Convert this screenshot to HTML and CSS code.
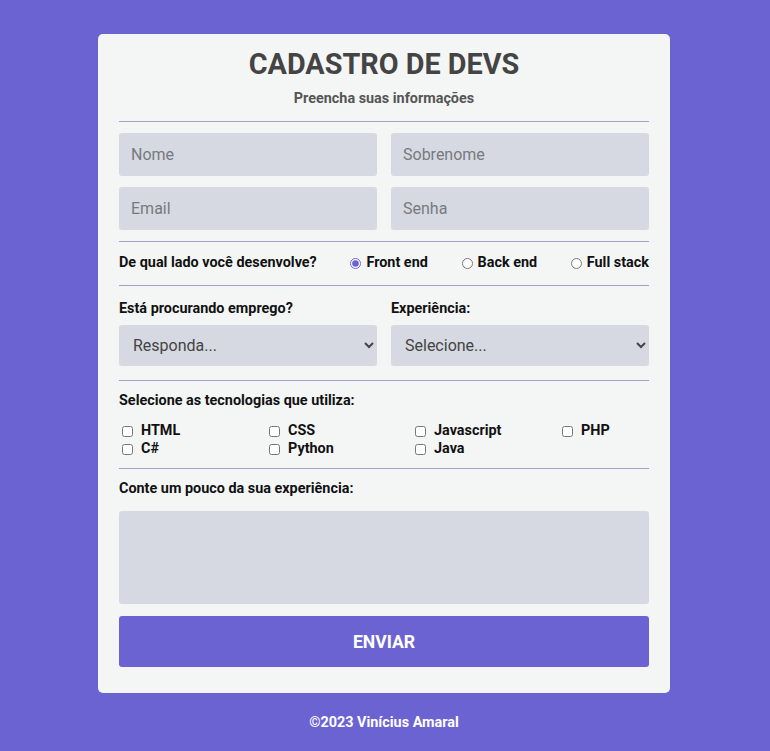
FILE: index.html
```html
<!DOCTYPE html>
<html lang="pt-BR">
<head>
<meta charset="utf-8">
<title>Cadastro de Devs</title>
<link rel="stylesheet" href="styles.css">
</head>
<body>
<main class="card">
  <h1 class="title">CADASTRO DE DEVS</h1>
  <p class="subtitle">Preencha suas informações</p>
  <hr class="divider">
  <form class="form">
    <div class="grid2">
      <input class="field" type="text" placeholder="Nome">
      <input class="field" type="text" placeholder="Sobrenome">
      <input class="field" type="email" placeholder="Email">
      <input class="field" type="password" placeholder="Senha">
    </div>
    <hr class="divider">
    <div class="radio-row">
      <span class="q">De qual lado você desenvolve?</span>
      <label class="opt"><input class="radio" type="radio" name="lado" checked> Front end</label>
      <label class="opt"><input class="radio" type="radio" name="lado"> Back end</label>
      <label class="opt"><input class="radio" type="radio" name="lado"> Full stack</label>
    </div>
    <hr class="divider">
    <div class="grid2 selects">
      <div class="col">
        <label class="q">Está procurando emprego?</label>
        <select class="select"><option>Responda...</option></select>
      </div>
      <div class="col">
        <label class="q">Experiência:</label>
        <select class="select"><option>Selecione...</option></select>
      </div>
    </div>
    <hr class="divider">
    <p class="q block">Selecione as tecnologias que utiliza:</p>
    <div class="checks">
      <label class="opt"><input class="check" type="checkbox"> HTML</label>
      <label class="opt"><input class="check" type="checkbox"> CSS</label>
      <label class="opt"><input class="check" type="checkbox"> Javascript</label>
      <label class="opt"><input class="check" type="checkbox"> PHP</label>
      <label class="opt"><input class="check" type="checkbox"> C#</label>
      <label class="opt"><input class="check" type="checkbox"> Python</label>
      <label class="opt"><input class="check" type="checkbox"> Java</label>
    </div>
    <hr class="divider">
    <p class="q block">Conte um pouco da sua experiência:</p>
    <textarea class="area"></textarea>
    <button class="btn" type="button">ENVIAR</button>
  </form>
</main>
<footer class="footer">©2023 Vinícius Amaral</footer>
</body>
</html>
```
FILE: styles.css
```css
* { box-sizing: border-box; }
html, body { margin: 0; padding: 0; }
body {
  background: #6c63d3;
  font-family: Roboto, "Noto Sans", sans-serif;
  padding: 34px 2px 0 0;
}
.card {
  width: 572px;
  margin: 0 auto;
  background: #f4f6f6;
  border-radius: 5px;
  padding: 14px 21px 26px;
}
.title {
  margin: 0;
  text-align: center;
  font-size: 28.8px;
  line-height: 33px;
  font-weight: 700;
  color: #444;
}
.subtitle {
  margin: 9px 0 0;
  text-align: center;
  font-size: 14.4px;
  line-height: 18px;
  font-weight: 700;
  color: #555;
}
.divider {
  border: 0;
  height: 1px;
  background: #a3a1c9;
  margin: 13px 0 11px;
}
.form .divider { margin: 11px 0; }
.grid2 {
  display: grid;
  grid-template-columns: 1fr 1fr;
  column-gap: 14px;
  row-gap: 11px;
}
.field {
  height: 43px;
  border: 0;
  border-radius: 3px;
  background: #d6d9e1;
  padding: 0 12px;
  font-family: Roboto, sans-serif;
  font-size: 16px;
  color: #444;
}
.field::placeholder { color: #767a80; }
.radio-row {
  display: flex;
  justify-content: space-between;
  align-items: center;
  padding: 1px 0 2px;
}
.q {
  font-size: 14.4px;
  font-weight: 700;
  line-height: 18px;
  color: #111;
}
.opt {
  display: flex;
  align-items: center;
  gap: 4px;
  font-size: 14.4px;
  font-weight: 700;
  color: #111;
  line-height: 18px;
}
.radio {
  margin: 0 1px 0 2px;
  width: 11px;
  height: 11px;
  accent-color: #6c63d3;
}
.selects { padding: 3px 0; }
.selects .col {
  display: flex;
  flex-direction: column;
  gap: 7px;
}
.select {
  height: 41px;
  border: 0;
  border-radius: 3px;
  background-color: #d6d9e1;
  padding: 0 10px 0 10px;
  font-family: Roboto, sans-serif;
  font-size: 16px;
  color: #444;
}
.block { margin: 0; }
.checks {
  display: grid;
  grid-template-columns: 147px 146px 147px auto;
  padding-top: 1px;
  margin: 11px 0 0 3px;
}
.checks + .divider { margin-top: 10px; }
.check {
  width: 11px;
  height: 11px;
  margin: 0 4px 0 0;
}
.area {
  display: block;
  width: 100%;
  height: 93px;
  margin-top: 13px;
  border: 0;
  border-radius: 3px;
  background: #d6d9e1;
  resize: none;
}
.btn {
  display: block;
  width: 100%;
  height: 51px;
  margin-top: 12px;
  border: 0;
  border-radius: 3px;
  background: #6c63d3;
  color: #fff;
  font-family: Roboto, sans-serif;
  font-size: 17.6px;
  font-weight: 700;
}
.footer {
  text-align: center;
  color: #fff;
  font-size: 14.4px;
  line-height: 18px;
  font-weight: 700;
  padding: 21px 0 19px;
}
```
